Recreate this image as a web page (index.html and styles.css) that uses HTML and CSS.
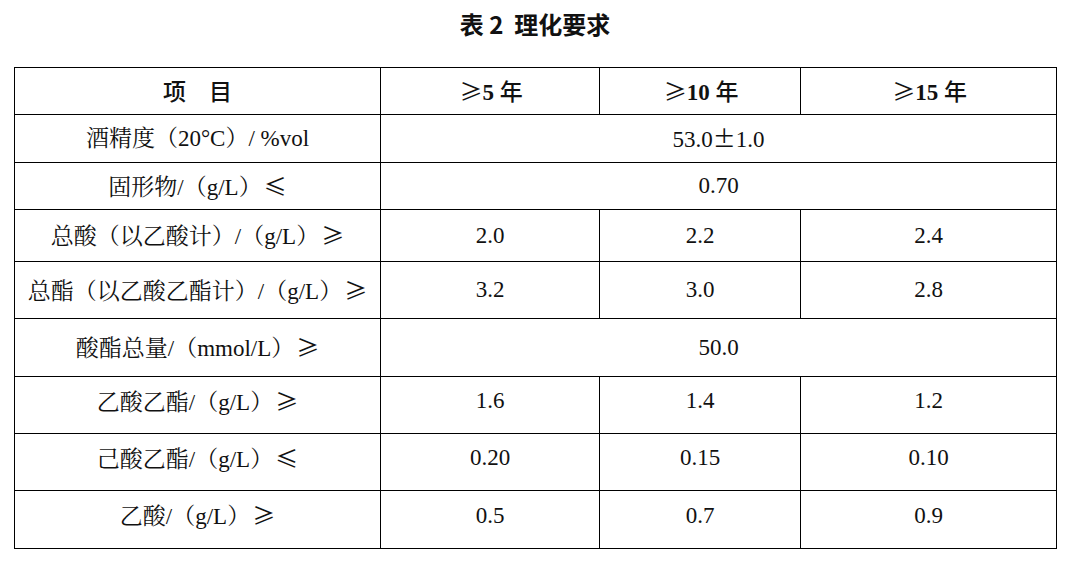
FILE: index.html
```html
<!DOCTYPE html>
<html lang="zh-CN">
<head>
<meta charset="utf-8">
<title>表 2 理化要求</title>
<link rel="stylesheet" href="styles.css">
</head>
<body>
<div class="page">
  <h1 class="title">表 2&nbsp; 理化要求</h1>
  <table class="spec">
    <colgroup>
      <col class="c1"><col class="c2"><col class="c3"><col class="c4">
    </colgroup>
    <thead>
      <tr class="h47">
        <th><span class="hei">项　目</span></th>
        <th><span class="ge">≥</span><b>5</b> <span class="hei">年</span></th>
        <th><span class="ge">≥</span><b>10</b> <span class="hei">年</span></th>
        <th><span class="ge">≥</span><b>15</b> <span class="hei">年</span></th>
      </tr>
    </thead>
    <tbody>
      <tr class="h48">
        <td>酒精度（20°C）/ %vol</td>
        <td colspan="3">53.0<span class="pm">±</span>1.0</td>
      </tr>
      <tr class="h47">
        <td>固形物/（g/L）<span class="ge">≤</span></td>
        <td colspan="3">0.70</td>
      </tr>
      <tr class="h52">
        <td>总酸（以乙酸计）/（g/L）<span class="ge">≥</span></td>
        <td>2.0</td><td>2.2</td><td>2.4</td>
      </tr>
      <tr class="h57">
        <td>总酯（以乙酸乙酯计）/（g/L）<span class="ge">≥</span></td>
        <td>3.2</td><td>3.0</td><td>2.8</td>
      </tr>
      <tr class="h58">
        <td>酸酯总量/（mmol/L）<span class="ge">≥</span></td>
        <td colspan="3">50.0</td>
      </tr>
      <tr class="h57 lift">
        <td>乙酸乙酯/（g/L）<span class="ge">≥</span></td>
        <td>1.6</td><td>1.4</td><td>1.2</td>
      </tr>
      <tr class="h57 lift">
        <td>己酸乙酯/（g/L）<span class="ge">≤</span></td>
        <td>0.20</td><td>0.15</td><td>0.10</td>
      </tr>
      <tr class="h58 lift">
        <td>乙酸/（g/L）<span class="ge">≥</span></td>
        <td>0.5</td><td>0.7</td><td>0.9</td>
      </tr>
    </tbody>
  </table>
</div>
</body>
</html>
```
FILE: styles.css
```css
html, body {
  margin: 0;
  background: #fff;
  color: #000;
}

.page {
  padding: 0 0 0 14px;
}

.title {
  margin: 0;
  width: 1042px;
  height: 67px;
  line-height: 48px;
  text-align: center;
  font-family: "Noto Sans CJK SC", "Noto Sans", sans-serif;
  font-size: 24px;
  font-weight: 700;
  color: #111;
}

.spec {
  width: 1042px;
  border-collapse: collapse;
  table-layout: fixed;
  font-family: "Liberation Serif", "Noto Serif CJK SC", "Noto Sans CJK SC", serif;
  font-size: 23px;
  font-weight: 400;
  color: #111;
}

.c1 { width: 366px; }
.c2 { width: 219px; }
.c3 { width: 201px; }
.c4 { width: 256px; }

.spec th,
.spec td {
  border: 1.5px solid #000;
  padding: 0;
  text-align: center;
  vertical-align: middle;
  line-height: 26px;
  font-weight: 400;
  white-space: nowrap;
}

.h47 { height: 47px; }
.h48 { height: 48px; }
.h52 { height: 52px; }
.h57 { height: 57px; }
.h58 { height: 58px; }

.lift td {
  padding-bottom: 8px;
}

.hei {
  font-family: "Noto Sans CJK SC", sans-serif;
  font-weight: 500;
}

.spec b {
  font-family: "Liberation Serif", serif;
  font-weight: 700;
}

.ge {
  font-family: "Noto Sans CJK SC", sans-serif;
  font-weight: 400;
  padding-left: 2px;
}

.pm {
  display: inline-block;
  width: 1em;
  text-align: center;
  font-family: "Noto Sans CJK SC", sans-serif;
  font-weight: 400;
}
```
